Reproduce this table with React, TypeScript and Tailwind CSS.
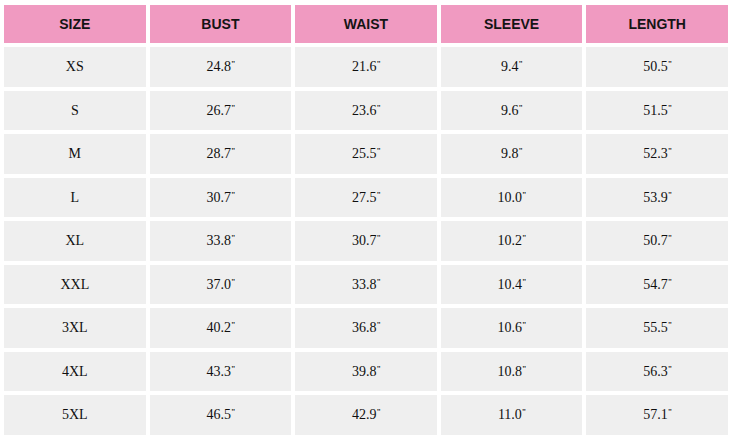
import React from 'react';

const headers = ['SIZE', 'BUST', 'WAIST', 'SLEEVE', 'LENGTH'];

const rows = [
  ['XS', '24.8', '21.6', '9.4', '50.5'],
  ['S', '26.7', '23.6', '9.6', '51.5'],
  ['M', '28.7', '25.5', '9.8', '52.3'],
  ['L', '30.7', '27.5', '10.0', '53.9'],
  ['XL', '33.8', '30.7', '10.2', '50.7'],
  ['XXL', '37.0', '33.8', '10.4', '54.7'],
  ['3XL', '40.2', '36.8', '10.6', '55.5'],
  ['4XL', '43.3', '39.8', '10.8', '56.3'],
  ['5XL', '46.5', '42.9', '11.0', '57.1'],
];

export default function App() {
  return (
    <div className="w-[731px] h-[439px] bg-white pt-[5px] pl-[4px] pr-[3px] overflow-hidden">
      <div className="grid grid-cols-5 gap-x-[4px]">
        {headers.map((h) => (
          <div
            key={h}
            className="h-[38px] bg-[#f09ac1] flex items-center justify-center text-[14px] font-bold text-[#141414] font-['Liberation_Sans',Arial,sans-serif]"
          >
            {h}
          </div>
        ))}
      </div>
      <div className="flex flex-col gap-y-[4px] mt-[4px]">
        {rows.map((r) => (
          <div key={r[0]} className="grid grid-cols-5 gap-x-[4px]">
            {r.map((v, i) => (
              <div
                key={i}
                className="h-[39.5px] bg-[#efefef] flex items-center justify-center text-[14px] text-[#0f0f0f] font-['Liberation_Serif','Times_New_Roman',serif]"
              >
                <span>
                  {v}
                  {i > 0 && (
                    <span className="relative -top-[4px] text-[8px] font-bold leading-none tracking-[-1px]">"</span>
                  )}
                </span>
              </div>
            ))}
          </div>
        ))}
      </div>
    </div>
  );
}
